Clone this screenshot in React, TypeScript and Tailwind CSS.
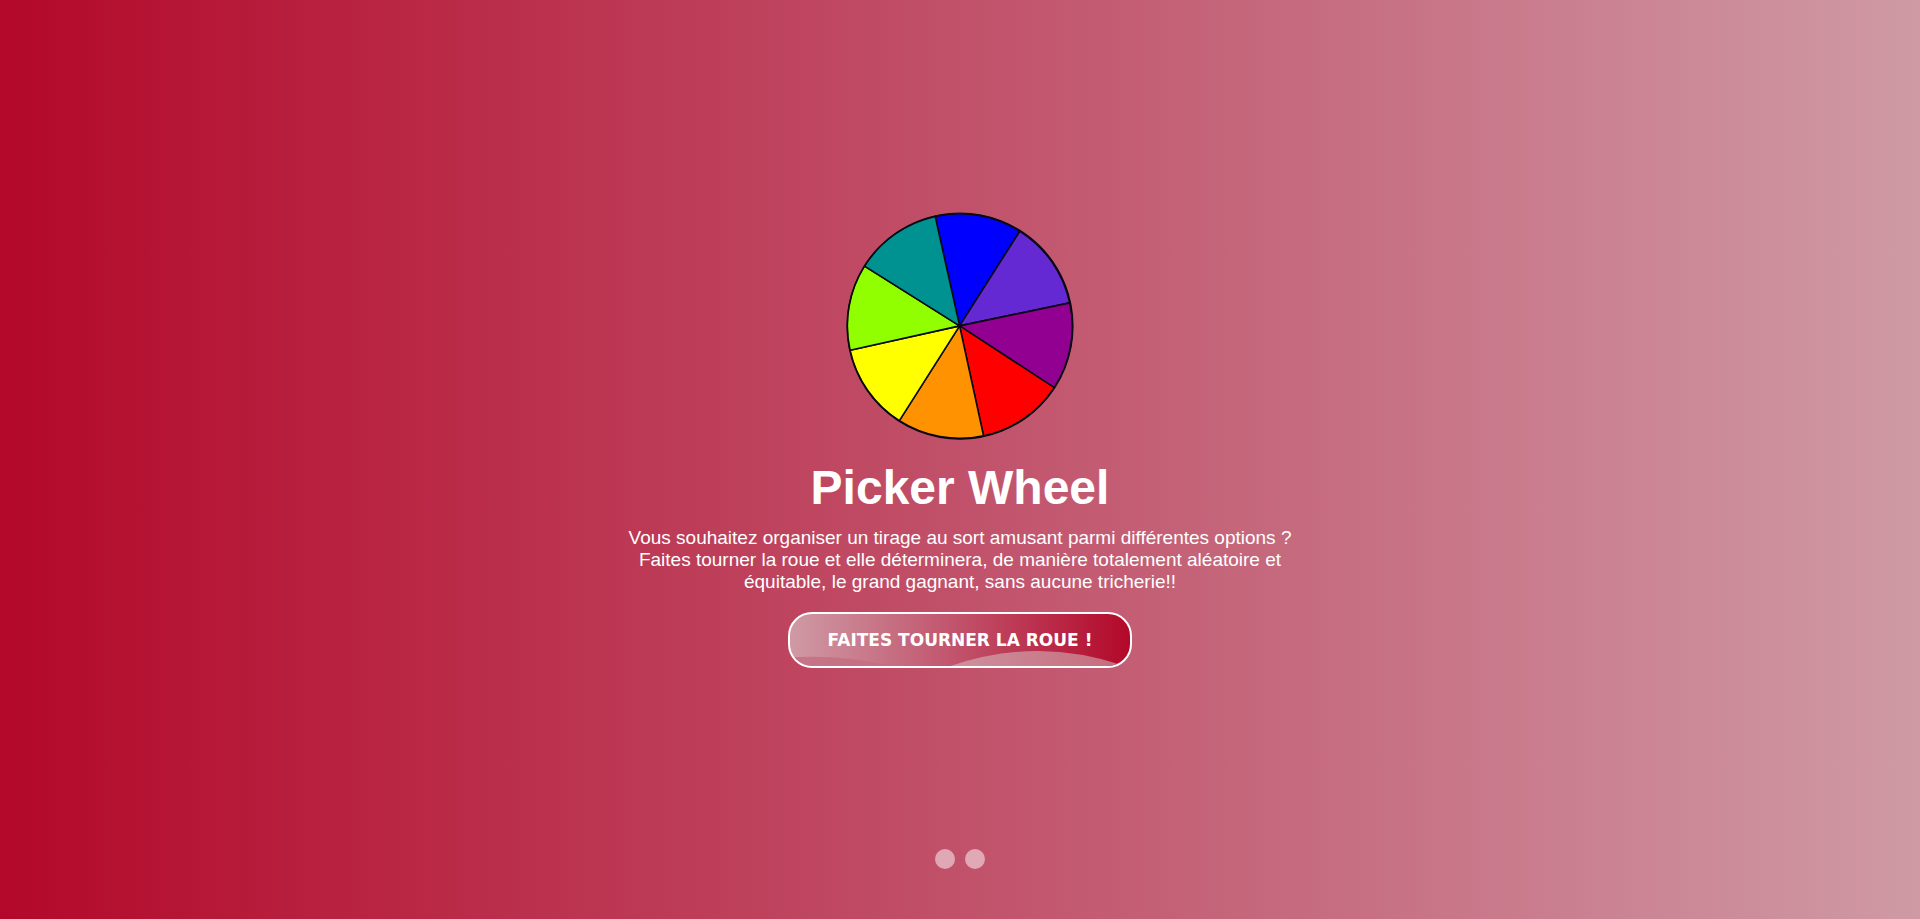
const SLICES = [
  { color: '#0000ff', path: 'M113 113 L88.6 3.7 A112 112 0 0 1 173.1 18.5 Z' },
  { color: '#6429d3', path: 'M113 113 L173.1 18.5 A112 112 0 0 1 222.9 90 Z' },
  { color: '#910091', path: 'M113 113 L222.9 90 A112 112 0 0 1 207.5 174.6 Z' },
  { color: '#ff0000', path: 'M113 113 L207.5 174.6 A112 112 0 0 1 136.9 222.8 Z' },
  { color: '#ff9200', path: 'M113 113 L136.9 222.8 A112 112 0 0 1 52.9 207.6 Z' },
  { color: '#ffff00', path: 'M113 113 L52.9 207.6 A112 112 0 0 1 3.7 137.4 Z' },
  { color: '#91ff00', path: 'M113 113 L3.7 137.4 A112 112 0 0 1 18.1 53.3 Z' },
  { color: '#009191', path: 'M113 113 L18.1 53.3 A112 112 0 0 1 88.6 3.7 Z' },
];

function Wheel() {
  return (
    <svg className="size-57" viewBox="-0.4 -0.7 227.6 227.6" aria-hidden="true">
      <g strokeLinejoin="round">
        {SLICES.map((slice) => (
          <path
            key={slice.color}
            d={slice.path}
            fill={slice.color}
            stroke="#0a0a14"
            strokeWidth="1.6"
          />
        ))}
        <circle cx="113.4" cy="113.2" r="112.7" fill="none" stroke="#0a0a14" strokeWidth="1.4" />
      </g>
      <circle cx="113" cy="113" r="2" fill="#0a0a14" />
    </svg>
  );
}

function SpinButton() {
  return (
    <button
      type="button"
      className="relative mt-[19px] flex h-14 items-center overflow-hidden rounded-3xl border-2 border-white bg-linear-to-r/srgb from-[#cf9aa5] via-[#c1516a] to-[#b30829] px-[38px] pt-0.5 font-['DejaVu_Sans',Verdana,sans-serif] text-[17px] font-bold text-white uppercase"
    >
      <svg
        className="absolute inset-0 size-full"
        viewBox="0 0 340 52"
        preserveAspectRatio="none"
        aria-hidden="true"
      >
        <defs>
          <linearGradient id="wave" x1="0" x2="1" y1="0" y2="0">
            <stop offset="0" stopColor="#cd919d" />
            <stop offset="1" stopColor="#c56b7c" />
          </linearGradient>
        </defs>
        <path d="M-30 46 Q40 37 100 52 L-30 52 Z" fill="#c46f81" fillOpacity="0.85" />
        <path d="M160 52 Q247 22 334 52 Z" fill="url(#wave)" />
      </svg>
      <span className="relative">Faites tourner la roue !</span>
    </button>
  );
}

export default function App() {
  return (
    <div className="relative flex min-h-screen flex-col items-center justify-center bg-linear-to-r/srgb from-[#b30829] via-[#c1516a] to-[#cf9aa5] pb-[39px] font-['Liberation_Sans',Arial,sans-serif] text-white">
      <main className="flex flex-col items-center px-4 text-center">
        <Wheel />
        <h1 className="mt-5 text-5xl leading-14 font-bold">Picker Wheel</h1>
        <p className="mt-[11px] max-w-[680px] text-[19px] leading-[22px]">
          Vous souhaitez organiser un tirage au sort amusant parmi différentes options ? Faites
          tourner la roue et elle déterminera, de manière totalement aléatoire et équitable, le
          grand gagnant, sans aucune tricherie!!
        </p>
        <SpinButton />
      </main>
      <nav className="absolute inset-x-0 bottom-[50px] flex justify-center gap-2.5" aria-label="Pages">
        <button type="button" aria-label="Page 1" className="size-5 rounded-full bg-white/50" />
        <button type="button" aria-label="Page 2" className="size-5 rounded-full bg-white/50" />
      </nav>
    </div>
  );
}
